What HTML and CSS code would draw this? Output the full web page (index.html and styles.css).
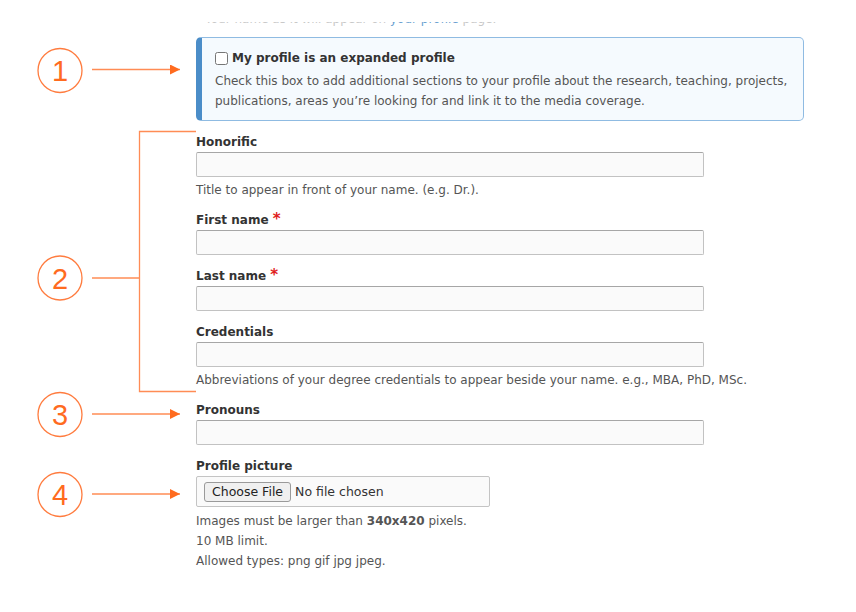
FILE: index.html
```html
<!DOCTYPE html>
<html lang="en">
<head>
    <meta charset="UTF-8">
    <meta name="viewport" content="width=device-width, initial-scale=1.0">
    <title>Edit profile</title>
    <link rel="stylesheet" href="styles.css">
</head>
<body>
    <div class="page">
        <svg class="notes" width="196" height="612" viewBox="0 0 196 612">
            <defs>
                <marker id="tip" viewBox="0 0 10 10" refX="10" refY="5" markerWidth="10" markerHeight="10" markerUnits="userSpaceOnUse" orient="auto">
                    <path d="M0 0 L10 5 L0 10 z" fill="#ff6b1f"/>
                </marker>
            </defs>
            <g class="ring">
                <circle cx="60" cy="70.5" r="22"/>
                <circle cx="60" cy="278" r="22"/>
                <circle cx="60" cy="414.5" r="22"/>
                <circle cx="60" cy="494.5" r="22"/>
            </g>
            <g class="num">
                <text x="60" y="81">1</text>
                <text x="60" y="288.5">2</text>
                <text x="60" y="425">3</text>
                <text x="60" y="505">4</text>
            </g>
            <g class="line">
                <line x1="92" y1="69.5" x2="180" y2="69.5" marker-end="url(#tip)"/>
                <line x1="92" y1="414" x2="180" y2="414" marker-end="url(#tip)"/>
                <line x1="92" y1="494" x2="180" y2="494" marker-end="url(#tip)"/>
                <polyline points="196,131.5 139.5,131.5 139.5,391.5 196,391.5"/>
                <line x1="92" y1="278" x2="139.5" y2="278"/>
            </g>
        </svg>

        <form class="profile-form">
            <div class="cut-line">
                <div class="strip">
                    <span>Your name as it will appear on <a href="#">your profile</a> page.</span>
                </div>
            </div>

            <div class="callout">
                <label class="check">
                    <input type="checkbox">
                    <span>My profile is an expanded profile</span>
                </label>
                <p class="callout-text">Check this box to add additional sections to your profile about the research, teaching, projects, publications, areas you’re looking for and link it to the media coverage.</p>
            </div>

            <div class="field">
                <label for="honorific">Honorific</label>
                <input type="text" id="honorific">
                <div class="help">Title to appear in front of your name. (e.g. Dr.).</div>
            </div>

            <div class="field">
                <label for="first-name">First name <span class="req">*</span></label>
                <input type="text" id="first-name">
            </div>

            <div class="field">
                <label for="last-name">Last name <span class="req">*</span></label>
                <input type="text" id="last-name">
            </div>

            <div class="field">
                <label for="credentials">Credentials</label>
                <input type="text" id="credentials">
                <div class="help">Abbreviations of your degree credentials to appear beside your name. e.g., MBA, PhD, MSc.</div>
            </div>

            <div class="field">
                <label for="pronouns">Pronouns</label>
                <input type="text" id="pronouns">
            </div>

            <div class="field">
                <label>Profile picture</label>
                <div class="file-box">
                    <button type="button" class="file-btn">Choose File</button>
                    <span class="file-name">No file chosen</span>
                </div>
                <div class="help-list">
                    <div class="help">Images must be larger than <strong>340x420</strong> pixels.</div>
                    <div class="help">10 MB limit.</div>
                    <div class="help">Allowed types: png gif jpg jpeg.</div>
                </div>
            </div>
        </form>
    </div>
</body>
</html>
```
FILE: styles.css
```css
* {
    margin: 0;
    padding: 0;
    box-sizing: border-box;
}

body {
    background: #fff;
    color: #333;
    font-family: "DejaVu Sans", Verdana, sans-serif;
    font-size: 12px;
    line-height: 20px;
}

.page {
    position: relative;
    width: 856px;
    height: 612px;
    padding-left: 196px;
    overflow: hidden;
}

/* annotation overlay */
.notes {
    position: absolute;
    top: 0;
    left: 0;
}

.ring circle {
    fill: none;
    stroke: #ff7c3f;
    stroke-width: 1.3;
}

.num text {
    fill: #ff6b1f;
    font-family: "Liberation Sans", Arial, sans-serif;
    font-size: 29px;
    text-anchor: middle;
}

.line line,
.line polyline {
    fill: none;
    stroke: #ff8c55;
    stroke-width: 1.3;
}

.profile-form {
    width: 608px;
}

/* bottom edge of the text above, scrolled out of view */
.cut-line {
    height: 27px;
    padding: 22px 0 0 9px;
}

.strip {
    display: flow-root;
    height: 4px;
    overflow: hidden;
    color: #c8c8c8;
}

.strip span {
    display: block;
    margin-top: -13px;
}

.strip a {
    color: #6a9fd0;
    text-decoration: none;
}

.callout {
    margin-top: 10px;
    padding: 10px 12px 9px 13px;
    background: #f5fafe;
    border: 1px solid #8fbbe2;
    border-left: 6px solid #4b8dc8;
    border-radius: 5px;
}

.check {
    display: flex;
    align-items: center;
    gap: 4px;
    font-weight: bold;
    font-size: 12px;
    color: #333;
}

.check input {
    width: 13px;
    height: 13px;
    margin: 0;
}

.callout-text {
    margin-top: 3px;
    color: #555;
}

.field {
    margin-top: 10px;
    width: 560px;
}

.field label {
    display: block;
    height: 21px;
    padding-top: 1px;
    font-weight: bold;
    color: #333;
}

.req {
    color: #e02020;
    font-size: 15px;
    line-height: 10px;
}

.field input[type="text"] {
    display: block;
    width: 508px;
    height: 25px;
    background: #fafafa;
    border: 1px solid #c2c2c2;
    border-top-color: #a6a6a6;
    border-radius: 2px;
    outline: none;
}

.help {
    color: #555;
    height: 22px;
    padding-top: 3px;
}

.help-list {
    padding-top: 4px;
}

.help-list .help {
    height: 20px;
    padding-top: 0;
}

.file-box {
    display: flex;
    align-items: center;
    gap: 4px;
    width: 294px;
    height: 31px;
    padding-left: 7px;
    background: #fafafa;
    border: 1px solid #c4c4c4;
    border-radius: 2px;
}

.file-btn {
    font-family: "DejaVu Sans", Verdana, sans-serif;
    font-size: 12.5px;
    color: #222;
    padding: 1px 7px;
    height: 20px;
    background: #f0f0f0;
    border: 1px solid #9a9a9a;
    border-radius: 3px;
}

.file-name {
    font-size: 12.5px;
    color: #333;
}
```
